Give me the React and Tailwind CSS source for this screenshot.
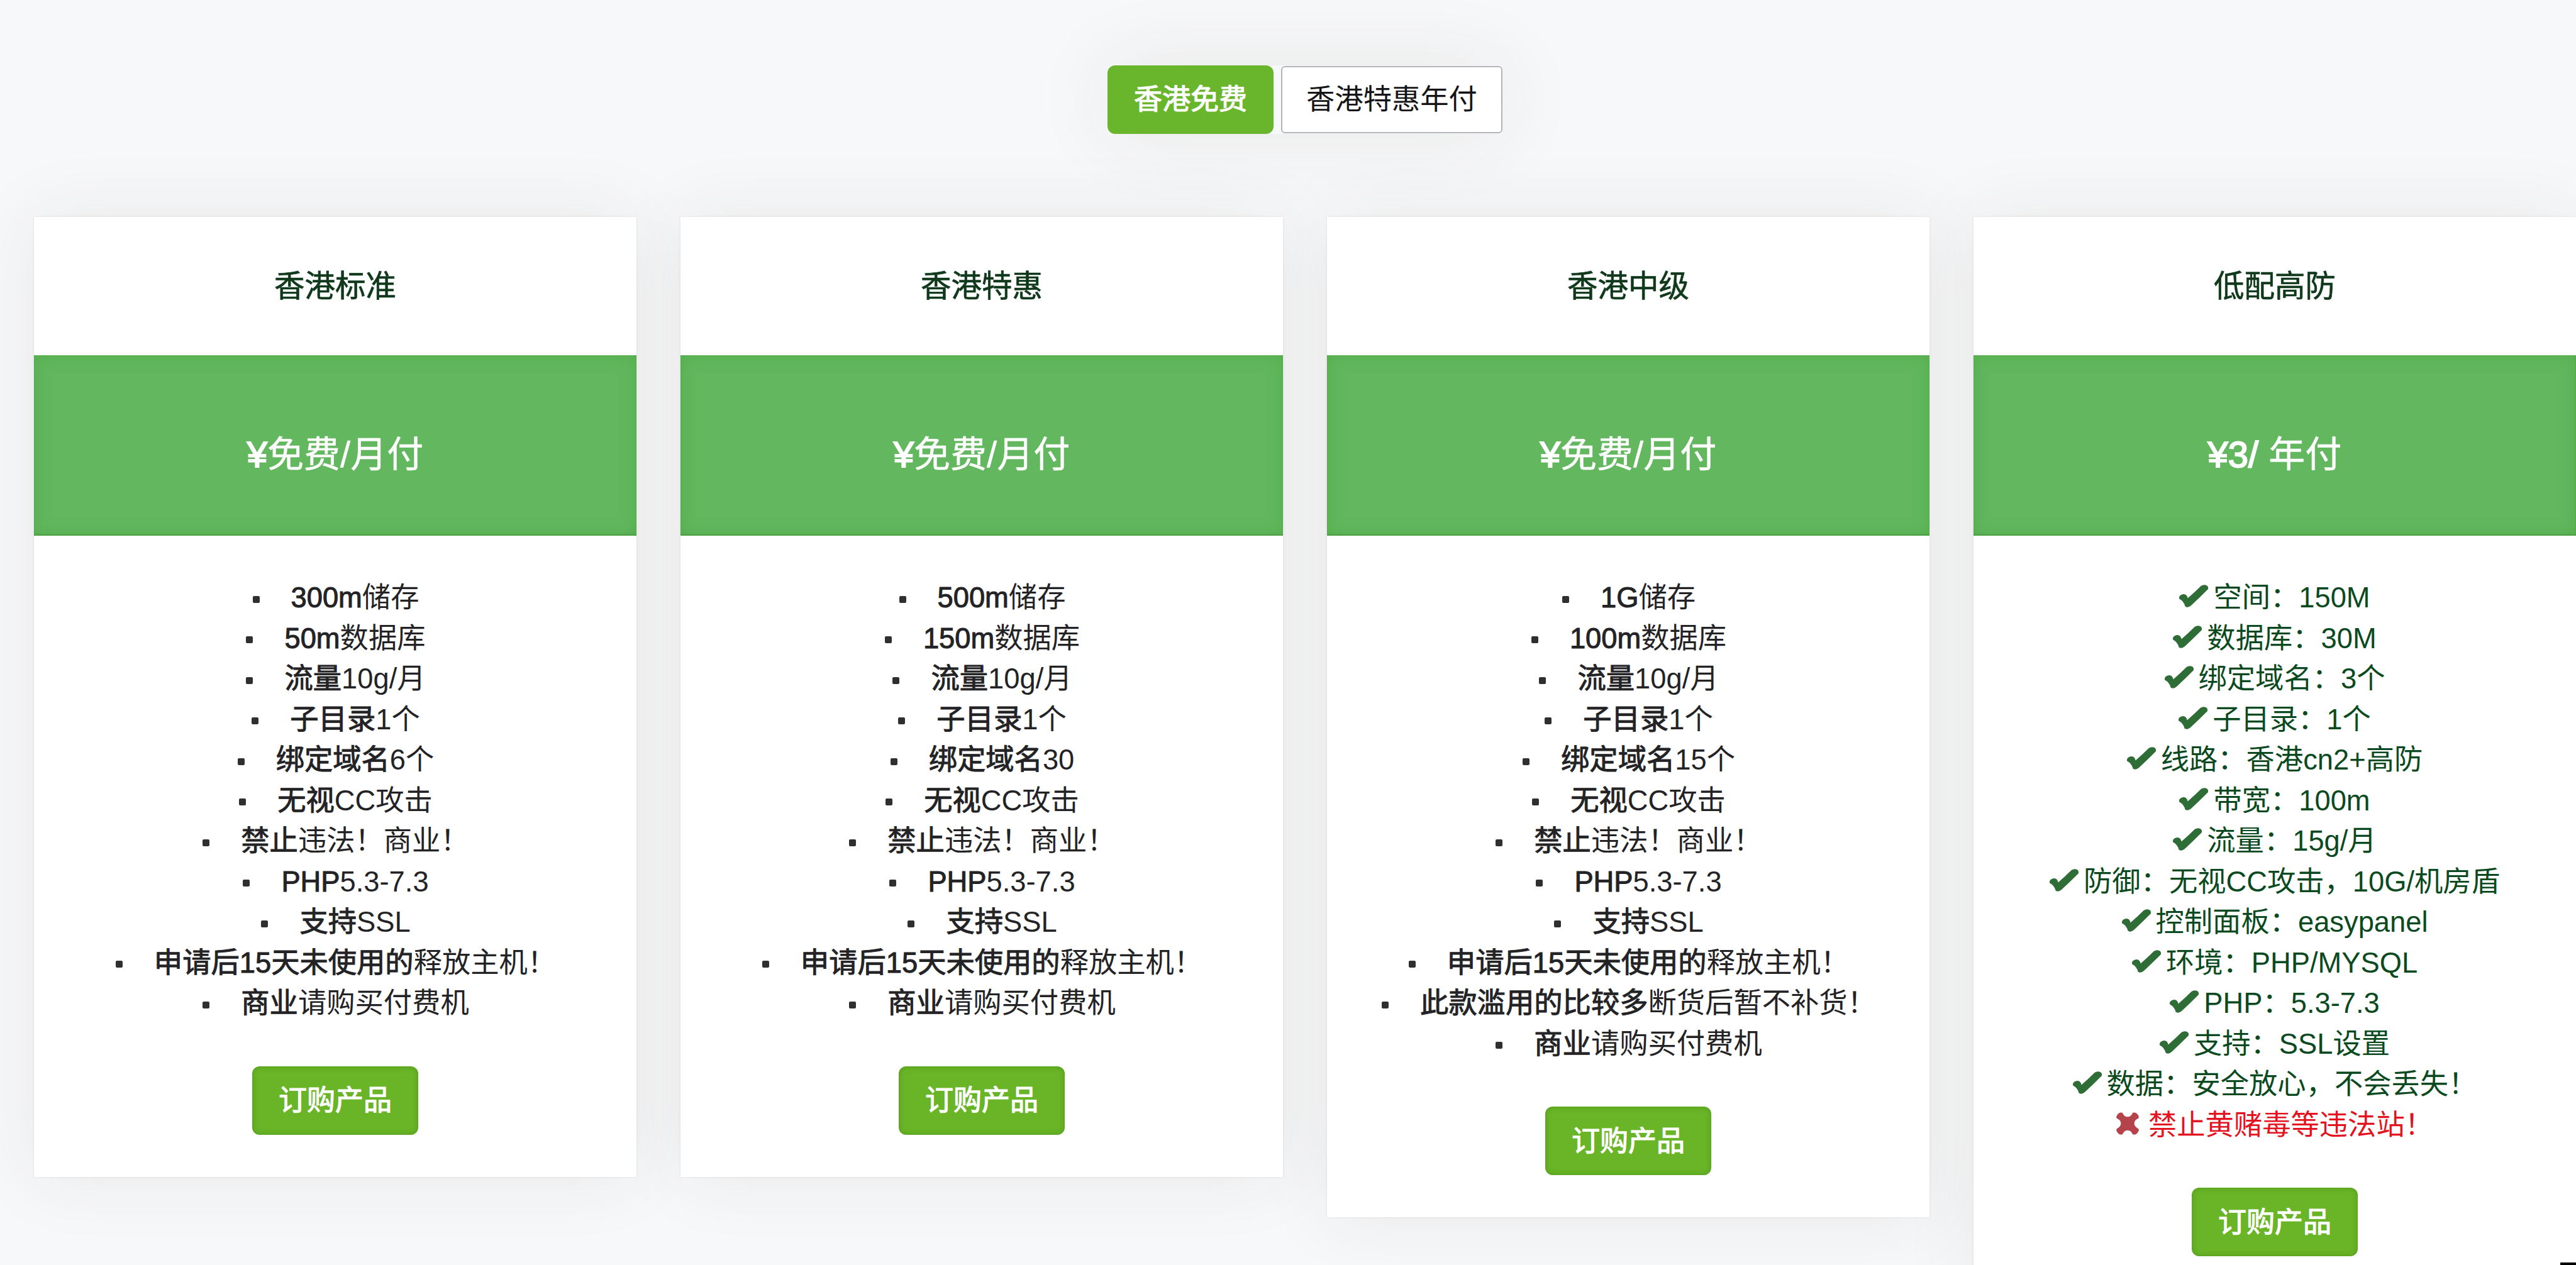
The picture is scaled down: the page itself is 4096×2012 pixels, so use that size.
import React, { useState } from 'react'

const TABS = ['香港免费', '香港特惠年付']

// each row: [emphasised part, rest]
const PLANS = [
  {
    name: '香港标准',
    price: ['¥', '免费/月付'],
    rows: [
      ['300m', '储存'],
      ['50m', '数据库'],
      ['流量', '10g/月'],
      ['子目录', '1个'],
      ['绑定域名', '6个'],
      ['无视', 'CC攻击'],
      ['禁止', '违法！商业！'],
      ['PHP', '5.3-7.3'],
      ['支持', 'SSL'],
      ['申请后15天未使用的', '释放主机！'],
      ['商业', '请购买付费机'],
    ],
  },
  {
    name: '香港特惠',
    price: ['¥', '免费/月付'],
    rows: [
      ['500m', '储存'],
      ['150m', '数据库'],
      ['流量', '10g/月'],
      ['子目录', '1个'],
      ['绑定域名', '30'],
      ['无视', 'CC攻击'],
      ['禁止', '违法！商业！'],
      ['PHP', '5.3-7.3'],
      ['支持', 'SSL'],
      ['申请后15天未使用的', '释放主机！'],
      ['商业', '请购买付费机'],
    ],
  },
  {
    name: '香港中级',
    price: ['¥', '免费/月付'],
    rows: [
      ['1G', '储存'],
      ['100m', '数据库'],
      ['流量', '10g/月'],
      ['子目录', '1个'],
      ['绑定域名', '15个'],
      ['无视', 'CC攻击'],
      ['禁止', '违法！商业！'],
      ['PHP', '5.3-7.3'],
      ['支持', 'SSL'],
      ['申请后15天未使用的', '释放主机！'],
      ['此款滥用的比较多', '断货后暂不补货！'],
      ['商业', '请购买付费机'],
    ],
  },
  {
    name: '低配高防',
    price: ['¥3/', ' 年付'],
    checks: [
      '空间：150M',
      '数据库：30M',
      '绑定域名：3个',
      '子目录：1个',
      '线路：香港cn2+高防',
      '带宽：100m',
      '流量：15g/月',
      '防御：无视CC攻击，10G/机房盾',
      '控制面板：easypanel',
      '环境：PHP/MYSQL',
      'PHP：5.3-7.3',
      '支持：SSL设置',
      '数据：安全放心，不会丢失！',
    ],
    warning: '禁止黄赌毒等违法站！',
  },
]

function CheckIcon() {
  return (
    <svg viewBox="0 0 54 42" className="w-[46px] h-[36px] mr-2 -mt-1.5 shrink-0" fill="#2f6d37">
      <path d="M0 26 Q-1 19 8 17.500 Q14 17 16 25 Q29 14 41 2 Q46 -1 51 1 Q55 3 54 8 Q37 25 22 39 Q16 44 11 40 Q9 31 0 26 Z" />
    </svg>
  )
}

function CrossIcon() {
  return (
    <svg viewBox="0 0 44 44" className="w-[36px] h-[36px] mr-[15px] -mt-1.5 shrink-0" fill="#b4434c">
      <path d="M2 5 Q6 -1 12 1 Q15 9 22 9 Q29 9 32 1 Q38 -1 42 5 Q45 9 43 12 Q35 15 35 22 Q35 28 43 32 Q45 35 42 39 Q38 45 32 43 Q29 35 22 35 Q15 35 12 43 Q6 45 2 39 Q-1 35 1 32 Q9 28 9 22 Q9 15 1 12 Q-1 9 2 5 Z" />
    </svg>
  )
}

function OrderButton() {
  return (
    <button className="h-[109px] w-[264px] pt-0.5 rounded-[12px] bg-[#69b427] text-[45px] text-white [-webkit-text-stroke:1.2px] shadow-[inset_0_0_8px_rgba(60,130,20,0.5)]">
      订购产品
    </button>
  )
}

function PlanCard({ plan }) {
  return (
    <div className="w-[958px] shrink-0 shadow-[0_0_110px_rgba(70,50,0,0.08)]">
      {/* z-10 keeps the neighbour's shadow off this card */}
      <div className="relative z-10 bg-white flex flex-col items-center pb-[67px] shadow-[0_0_3px_rgba(0,0,0,0.1)]">
        <h3 className="h-[220px] flex items-center text-[48.5px] text-[#10391c] [-webkit-text-stroke:0.7px]">
          {plan.name}
        </h3>
        <div className="w-full h-[287px] pt-7 flex items-center justify-center bg-[#62b75f] text-white text-[58px] whitespace-pre shadow-[inset_0_0_24px_rgba(70,165,50,0.5),inset_0_-2px_2px_#4c9a4a]">
          <span className="[-webkit-text-stroke:2px]">{plan.price[0]}</span>
          <span className="[-webkit-text-stroke:0.5px]">{plan.price[1]}</span>
        </div>

        <ul className="pt-[67px] mb-[67px] text-[45.3px] leading-[64.5px] text-[#232326] whitespace-nowrap">
          {plan.rows?.map(([strong, rest]) => (
            <li key={strong + rest} className="h-[64.5px] flex items-center justify-center">
              <span className="w-[63px] pl-[2px]">
                <span className="block w-[11px] h-[11px] mt-1 rounded-[2px] bg-[#2f2f32]" />
              </span>
              <span className="[-webkit-text-stroke:1px]">{strong}</span>
              <span>{rest}</span>
            </li>
          ))}
          {plan.checks?.map(text => (
            <li key={text} className="h-[64.5px] flex items-center justify-center text-[#0b4a20]">
              <CheckIcon />
              <span>{text}</span>
            </li>
          ))}
          {plan.warning && (
            <li className="h-[64.5px] flex items-center justify-center text-[#e3141f]">
              <CrossIcon />
              <span>{plan.warning}</span>
            </li>
          )}
        </ul>

        <OrderButton />
      </div>
    </div>
  )
}

export default function App() {
  const [tab, setTab] = useState(0)

  return (
    <div className="relative w-[4096px] h-[2012px] overflow-hidden bg-[#f7f8fa] font-['Liberation_Sans','Noto_Sans_CJK_SC',sans-serif]">
      {/* Tabs */}
      <div className="h-[345px] pt-[103.5px] pl-[1761px]">
        <div className="flex items-center gap-3 w-[628px] h-[109px] shadow-[0_0_130px_rgba(70,50,0,0.09)]">
          {TABS.map((label, i) => (
            <button
              key={label}
              onClick={() => setTab(i)}
              className={
                i === tab
                  ? 'h-[109px] w-[264px] pt-0.5 rounded-[12px] bg-[#69b52c] text-[45px] text-white [-webkit-text-stroke:1.2px]'
                  : 'h-[107px] w-[352px] pt-0.5 rounded-[6px] bg-white border-2 border-[#b4b5b8] text-[45.3px] text-[#151518]'
              }
            >
              {label}
            </button>
          ))}
        </div>
      </div>

      {/* Plans */}
      <div className="flex items-start gap-[70px] pl-[54px]">
        {PLANS.map(plan => (
          <PlanCard key={plan.name} plan={plan} />
        ))}
      </div>

      <div className="absolute right-0 bottom-0 z-20 w-[25px] h-1 bg-black" />
    </div>
  )
}
